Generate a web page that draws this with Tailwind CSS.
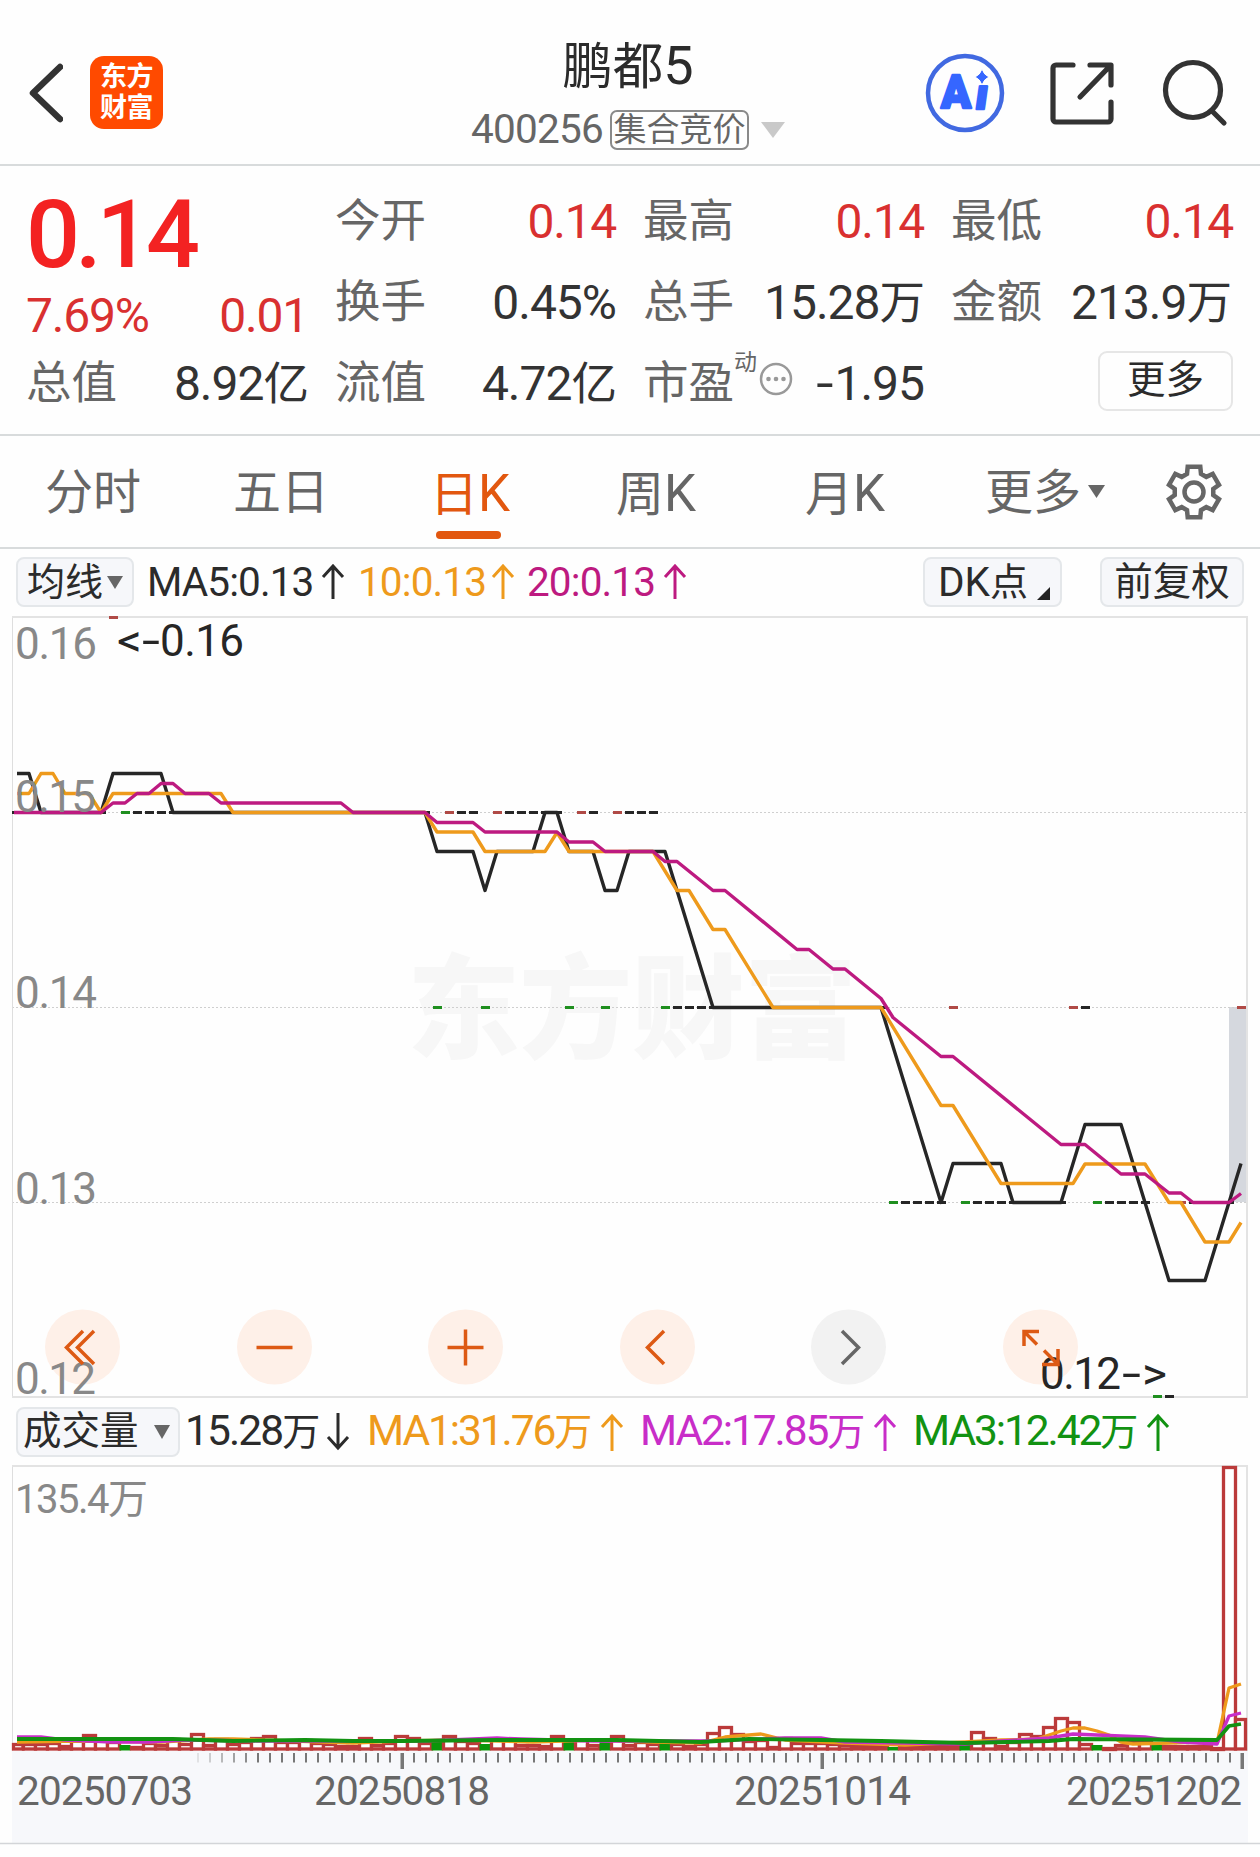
<!DOCTYPE html>
<html lang="zh-CN">
<head>
<meta charset="utf-8">
<title>鹏都5 400256</title>
<script src="https://cdn.jsdelivr.net/npm/@tailwindcss/browser@4"></script>
</head>
<body class="w-[1260px] h-[1857px] overflow-hidden bg-[#fefefe] font-['Roboto','Noto_Sans_CJK_SC',sans-serif] text-[#2b2b2b] leading-none">

<header class="h-[166px] border-b-2 border-[#d8dbdc] flex items-start whitespace-nowrap">
  <div class="w-[440px] pt-[56px] pl-[26px] flex items-center gap-[27px]">
    <svg class="w-[37px] h-[73px]" viewBox="0 0 37 73" fill="none" stroke="#333" stroke-width="6.500" stroke-linecap="round" stroke-linejoin="round"><path d="M34 11 7 37l27 26"/></svg>
    <div class="w-[73px] h-[73px] rounded-[14px] bg-[#ff4a00] text-white font-bold text-[27px] leading-[31px] pt-[6px] text-center tracking-[-0.5px]"><div>东方</div><div>财富</div></div>
  </div>
  <div class="w-[380px] pt-[39px] pr-[4px] flex flex-col items-center">
    <div class="text-[50.5px] leading-[54px]">鹏都<span class="text-[54px]">5</span></div>
    <div class="mt-[15px] h-[41px] flex items-center text-[#666]">
      <span class="text-[40.5px] tracking-[-0.8px]">400256</span>
      <span class="ml-[7px] w-[139px] h-[40px] rounded-[7px] border-2 border-[#8a8a8a] text-[33px] leading-[35px] text-center">集合竞价</span>
      <svg class="ml-[12px] w-[24px] h-[16px]" viewBox="0 0 24 16"><path d="M0 0h24L12 16z" fill="#c9c9c9"/></svg>
    </div>
  </div>
  <div class="flex-1 pt-[52px] pl-[104px] flex items-center">
    <svg class="w-[82px] h-[82px]" viewBox="0 0 82 82">
      <circle cx="41" cy="41" r="37" fill="none" stroke="#4169e1" stroke-width="4.500"/>
      <g fill="#3566ff" stroke="#3566ff" stroke-width="2.500" stroke-linejoin="round" font-family="Roboto" font-weight="900" font-size="47"><text x="17" y="56" textLength="30" lengthAdjust="spacingAndGlyphs">A</text><text font-size="43" x="50" y="57" transform="translate(8 0) skewX(-8)">ı</text></g>
      <path d="M58 17q2 6 7 8-5 2-7 8-2-6-7-8 5-2 7-8z" fill="#3566ff" stroke="#fefefe" stroke-width="1"/>
    </svg>
    <svg class="ml-[41px] w-[68px] h-[68px]" viewBox="0 0 68 68" fill="none" stroke="#333" stroke-width="5.200" stroke-linecap="round" stroke-linejoin="round"><path d="M26 6H9a3 3 0 0 0-3 3v51a3 3 0 0 0 3 3h52a3 3 0 0 0 3-3V43M43 6h21v20M63 7 33 38"/></svg>
    <svg class="ml-[43px] w-[70px] h-[70px]" viewBox="0 0 70 70" fill="none" stroke="#333" stroke-width="5.200" stroke-linecap="round"><circle cx="35" cy="32" r="27.500"/><path d="m54 53 12 12"/></svg>
  </div>
</header>

<section class="h-[270px] border-b-2 border-[#d8dbdc] pl-[26px] pr-[24px] grid grid-cols-[282px_281px_281px_282px] gap-x-[27px] whitespace-nowrap text-[45.5px] text-[#666]">
  <div class="pt-[20px]">
    <div class="h-[94px] pt-[3px] flex items-center text-[95px] font-medium tracking-[-4.8px] text-[#f32222]">0.14</div>
    <div class="h-[70px] pt-[2px] flex items-center justify-between text-[48px] tracking-[-1.2px] text-[#d93030]"><span>7.69%</span><span>0.01</span></div>
    <div class="h-[65px] pt-[3px] flex items-center justify-between"><span>总值</span><span class="text-[#333] tracking-[-1px]"><span class="text-[48px]">8.92</span>亿</span></div>
  </div>
  <div class="pt-[16px]">
    <div class="h-[80px] flex items-center justify-between"><span>今开</span><span class="text-[48px] tracking-[-1.3px] text-[#d93030]">0.14</span></div>
    <div class="h-[81px] flex items-center justify-between"><span>换手</span><span class="text-[48px] tracking-[-1px] text-[#333]">0.45%</span></div>
    <div class="h-[81px] flex items-center justify-between"><span>流值</span><span class="text-[#333] tracking-[-1px]"><span class="text-[48px]">4.72</span>亿</span></div>
  </div>
  <div class="pt-[16px]">
    <div class="h-[80px] flex items-center justify-between"><span>最高</span><span class="text-[48px] tracking-[-1.3px] text-[#d93030]">0.14</span></div>
    <div class="h-[81px] flex items-center justify-between"><span>总手</span><span class="text-[#333] tracking-[-1px]"><span class="text-[48px]">15.28</span>万</span></div>
    <div class="h-[81px] flex items-center"><span>市盈</span><span class="text-[23px] pb-[42px]">动</span>
      <svg class="ml-[1px] mb-[9px] w-[36px] h-[36px]" viewBox="0 0 36 36"><circle cx="18" cy="18" r="15" fill="none" stroke="#999" stroke-width="2.500"/><g fill="#999"><circle cx="10.500" cy="18" r="2.300"/><circle cx="18" cy="18" r="2.300"/><circle cx="25.500" cy="18" r="2.300"/></g></svg>
      <span class="ml-auto flex items-center text-[48px] tracking-[-1px] text-[#333]"><span class="inline-block scale-x-[1.3] mr-[4px]">-</span>1.95</span></div>
  </div>
  <div class="pt-[16px]">
    <div class="h-[80px] flex items-center justify-between"><span>最低</span><span class="text-[48px] tracking-[-1.3px] text-[#d93030]">0.14</span></div>
    <div class="h-[81px] flex items-center justify-between pr-[2px]"><span>金额</span><span class="text-[#333] tracking-[-1px]"><span class="text-[48px]">213.9</span>万</span></div>
    <div class="h-[81px] flex items-center justify-end"><div class="mb-[6px] w-[135px] h-[60px] rounded-[9px] border-2 border-[#e6e6e6] text-center text-[38.5px] leading-[54px] text-[#2b2b2b]">更多</div></div>
  </div>
</section>

<nav class="h-[113px] border-b-2 border-[#d8dbdc] pl-[45px] pt-[3px] flex items-center whitespace-nowrap text-[48px] text-[#666]">
  <div class="w-[188px]">分时</div>
  <div class="w-[197px]">五日</div>
  <div class="w-[186px] relative text-[#e2570f]">日<span class="text-[51px]">K</span><i class="absolute left-[6px] top-[63px] w-[65px] h-[8px] rounded-full bg-[#e2570f]"></i></div>
  <div class="w-[189px]">周<span class="text-[51px]">K</span></div>
  <div class="w-[180px]">月<span class="text-[51px]">K</span></div>
  <div class="w-[178px] flex items-center">更多<svg class="ml-[7px] mb-[3px] w-[17px] h-[13px]" viewBox="0 0 17 13"><path d="M0 0h17L8.500 13z" fill="#666"/></svg></div>
  <svg class="mb-[3px] w-[62px] h-[62px]" viewBox="-31 -31 62 62" fill="none" stroke="#666" stroke-width="4.500" stroke-linejoin="miter"><path id="gear"/><circle r="9.500"/></svg>
</nav>

<div class="h-[67px] pl-[16px] pr-[16px] pb-[1px] flex items-center whitespace-nowrap text-[40.5px] tracking-[-0.9px]">
  <div class="w-[118px] h-[50px] rounded-[8px] border-2 border-[#e4e7ea] bg-[#f6f7fa] pl-[9px] flex items-center text-[38px] tracking-normal">均线<svg class="ml-[4px] w-[16px] h-[13px]" viewBox="0 0 16 13"><path d="M0 0h16L8 13z" fill="#666"/></svg></div>
  <div class="ml-[13px] w-[211px] flex items-center justify-between pr-[13px]"><span>MA5:0.13</span><svg class="w-[24px] h-[36px]" viewBox="0 0 24 36" fill="none" stroke="currentColor" stroke-width="3"><path d="M12 35V2M2 13 12 2l10 11"/></svg></div>
  <div class="w-[169px] flex items-center justify-between pr-[12px] text-[#ee9a1c]"><span>10:0.13</span><svg class="w-[24px] h-[36px]" viewBox="0 0 24 36" fill="none" stroke="currentColor" stroke-width="3"><path d="M12 35V2M2 13 12 2l10 11"/></svg></div>
  <div class="w-[173px] flex items-center justify-between pr-[13px] text-[#bd1a80]"><span>20:0.13</span><svg class="w-[24px] h-[36px]" viewBox="0 0 24 36" fill="none" stroke="currentColor" stroke-width="3"><path d="M12 35V2M2 13 12 2l10 11"/></svg></div>
  <div class="ml-auto w-[139px] h-[50px] rounded-[8px] border-2 border-[#e4e7ea] bg-[#f6f7fa] pl-[13px] flex items-center text-[38px] tracking-[0px]"><span class="text-[40.5px]">DK</span>点<svg class="ml-[9px] mt-[22px] w-[13px] h-[13px]" viewBox="0 0 13 13"><path d="M13 0v13H0z" fill="#222"/></svg></div>
  <div class="ml-[38px] w-[144px] h-[50px] rounded-[8px] border-2 border-[#e4e7ea] bg-[#f6f7fa] text-center text-[38.5px] leading-[46px] tracking-normal">前复权</div>
</div>

<svg class="block w-[1260px] h-[782px] overflow-visible" viewBox="0 616 1260 782" id="price">
  <text x="407" y="1049" font-size="113" font-weight="900" fill="#f7f7f7" textLength="450" lengthAdjust="spacing">东方财富</text>
  <rect x="1229" y="1007" width="18" height="195" fill="#d5d8de"/>
  <g stroke="#cfcfcf" stroke-width="1" stroke-dasharray="2 2"><path d="M12 812.500H1246M12 1007.500H1246M12 1202.500H1246"/></g>
  <path d="M12.500 617V1397" stroke="#dedede" stroke-width="1"/><path d="M12 617H1247V1397H12" fill="none" stroke="#e3e3e3" stroke-width="2"/>
  <g id="dashes"></g>
  <g fill="none" stroke-width="3.400" stroke-linejoin="round" transform="translate(0 .5)">
    <path stroke="#262626" d="M17 773H29L41 812H101L113 773H161L173 812H425L437 851H473L485 890L497 851H533L545 812H557L569 851H593L605 890H617L629 851H665L713 1007H881L941 1202L953 1163H1001L1013 1202H1061L1085 1124H1121L1169 1280H1205L1241 1163"/>
    <path stroke="#ee9a1c" d="M17 793H29L41 773H53L65 793H89L101 812L113 793H221L233 812H425L437 831.500H473L485 851H545L557 832L569 851H653L677 890H689L713 929H725L773 1007H881L941 1105H953L1001 1183H1073L1085 1163.500H1145L1169 1202H1181L1205 1241.500H1229L1241 1222"/>
    <path stroke="#bd1a80" d="M14 812H101L113 802.500H125L137 793H149L161 783H173L185 793H209L221 802.500H341L353 812H425L437 822H473L485 831.500H557L569 841.500H593L605 851H653L665 861H677L713 890H725L797 949H809L833 968.500H845L881 998L893 1017L941 1056H953L1061 1144H1085L1121 1173.500H1145L1169 1192.500H1181L1193 1202H1229L1241 1193"/>
  </g>
  <g fill="#fef0e8"><circle cx="82.500" cy="1347" r="37.500"/><circle cx="274.500" cy="1347" r="37.500"/><circle cx="465.500" cy="1347" r="37.500"/><circle cx="657.500" cy="1347" r="37.500"/><circle cx="1040.500" cy="1347" r="37.500"/></g>
  <circle cx="848.500" cy="1347" r="37.500" fill="#f2f2f2"/>
  <g font-size="44" fill="#888">
    <text x="15" y="658.500" textLength="82">0.16</text><text x="15" y="812" textLength="81">0.15</text><text x="15" y="1008" textLength="82">0.14</text><text x="15" y="1203.500" textLength="82">0.13</text><text x="15" y="1394" textLength="81">0.12</text>
  </g>
  <g font-size="44" fill="#262626"><text x="160" y="656" textLength="84">0.16</text><text x="1040" y="1389" textLength="81">0.12</text>
    <text x="117" y="656" textLength="25" lengthAdjust="spacingAndGlyphs">&lt;</text><text x="142" y="656" textLength="18" lengthAdjust="spacingAndGlyphs">-</text>
    <text x="1122" y="1389" textLength="19" lengthAdjust="spacingAndGlyphs">-</text><text x="1142" y="1389" textLength="25" lengthAdjust="spacingAndGlyphs">&gt;</text></g>
  <g fill="none" stroke="#dd5a14" stroke-width="3.500">
    <path d="M83 1331 66.500 1347.500 83 1364M94 1331 77.500 1347.500 94 1364M256.500 1347.500h36M447.500 1347.500h36M465.500 1329.500v36M664 1331 647.500 1347.500 664 1364"/>
    <path d="M1024 1346V1331.500H1039M1024 1331.500 1037 1344.500M1058 1349V1364.500H1042M1058 1364.500 1044 1350.500"/>
    <path stroke="#666" d="m842 1331 16.500 16.500L842 1364"/>
  </g>
</svg>

<div class="h-[67px] pl-[16px] flex items-center whitespace-nowrap text-[42.5px]">
  <div class="w-[164px] h-[50px] rounded-[8px] border-2 border-[#e4e7ea] bg-[#f6f7fa] pl-[5px] flex items-center text-[38.5px]">成交量<svg class="ml-[15px] w-[16px] h-[14px]" viewBox="0 0 16 14"><path d="M0 0h16L8 14z" fill="#666"/></svg></div>
  <div class="ml-[5px] w-[182px] pr-[17px] flex items-center justify-between"><span class="tracking-[-1.9px]">15.28<span class="text-[38px]">万</span></span><svg class="w-[24px] h-[38px]" viewBox="0 0 24 38" fill="none" stroke="currentColor" stroke-width="3"><path d="M12 0v35M2 24l10 11 10-11"/></svg></div>
  <div class="w-[273px] pr-[16px] flex items-center justify-between text-[#ee9a1c]"><span class="tracking-[-2.1px]">MA1:31.76<span class="text-[38px]">万</span></span><svg class="w-[24px] h-[38px]" viewBox="0 0 24 38" fill="none" stroke="currentColor" stroke-width="3"><path d="M12 38V3M2 14 12 3l10 11"/></svg></div>
  <div class="w-[273px] pr-[16px] flex items-center justify-between text-[#c82dc8]"><span class="tracking-[-2.1px]">MA2:17.85<span class="text-[38px]">万</span></span><svg class="w-[24px] h-[38px]" viewBox="0 0 24 38" fill="none" stroke="currentColor" stroke-width="3"><path d="M12 38V3M2 14 12 3l10 11"/></svg></div>
  <div class="w-[273px] pr-[16px] flex items-center justify-between text-[#129212]"><span class="tracking-[-2.1px]">MA3:12.42<span class="text-[38px]">万</span></span><svg class="w-[24px] h-[38px]" viewBox="0 0 24 38" fill="none" stroke="currentColor" stroke-width="3"><path d="M12 38V3M2 14 12 3l10 11"/></svg></div>
</div>

<svg class="block w-[1260px] h-[392px]" viewBox="0 1465 1260 392">
  <rect x="12" y="1751" width="1236" height="92" fill="#f7f8fb"/>
  <path d="M0 1843.500H1260" stroke="#d3d5d8" stroke-width="1.500"/>
  <path d="M12.500 1466V1751" stroke="#dedede"/><path d="M12 1466H1247V1751" fill="none" stroke="#e3e3e3" stroke-width="2"/>
  <text x="15" y="1513" font-size="40" fill="#888" textLength="133">135.4万</text>
  <g id="bars"></g>
  <g fill="none" stroke-width="3.300" stroke-linejoin="round">
    <path stroke="#ee9a1c" d="M17 1742 77 1741 161 1742 209 1739 233 1739 293 1741 353 1743 401 1741 461 1740 533 1742 593 1740 653 1742 701 1743 725 1737 761 1734 785 1740 845 1743 905 1745 965 1742 1001 1740 1037 1739 1049 1735 1061 1731 1073 1728 1085 1728 1097 1731 1109 1735 1121 1742 1133 1744 1169 1743 1193 1742 1217 1743 1229 1688 1241 1684"/>
    <path stroke="#c82dc8" d="M17 1737 41 1737 65 1740 113 1742 149 1742 185 1740 257 1741 341 1741 425 1741 497 1738 521 1739 593 1741 665 1741 713 1741 785 1738 821 1738 845 1742 965 1744 1001 1741 1049 1738 1073 1734 1097 1735 1145 1737 1181 1742 1217 1744 1229 1716 1241 1713"/>
    <path stroke="#129212" stroke-width="3.800" d="M17 1739 65 1739 173 1739 233 1741 305 1740 353 1741 401 1741 497 1740 617 1740 701 1742 749 1739 821 1740 881 1741 965 1743 1049 1741 1073 1739 1217 1740 1229 1726 1241 1724"/>
  </g>
  <g id="ticks" fill="#777"></g>
  <g font-size="40.500" fill="#666"><text x="17" y="1805" textLength="176">20250703</text><text x="314" y="1805" textLength="176">20250818</text><text x="734" y="1805" textLength="177">20251014</text><text x="1066" y="1805" textLength="176">20251202</text></g>
</svg>

<script>
const center = i => 17 + 12 * i;

// Daily candles: opening equals closing, so each one is a short dash.
const K = '#262626', R = '#b04a46', G = '#1f8f1f';
const dash = (x, y, c) => `<rect x="${x - 4}" y="${y - 1}" width="9" height="3" fill="${c}"/>`;
const runs = [
  [617, R, 113, 113],
  [812, K, 17, 101], [812, G, 125, 125], [812, K, 137, 425], [812, R, 449, 449], [812, K, 461, 473], [812, R, 497, 497],
  [812, K, 509, 557], [812, R, 581, 581], [812, K, 593, 593], [812, R, 617, 617], [812, K, 629, 653],
  [1007, G, 437, 437], [1007, G, 485, 485], [1007, G, 569, 569], [1007, G, 605, 605], [1007, G, 665, 665], [1007, K, 677, 881],
  [1007, R, 953, 953], [1007, R, 1073, 1073], [1007, K, 1085, 1085], [1007, R, 1241, 1241],
  [1202, G, 893, 893], [1202, K, 905, 941], [1202, G, 965, 965], [1202, K, 977, 1061], [1202, G, 1097, 1097],
  [1202, K, 1109, 1145], [1202, R, 1181, 1181], [1202, K, 1193, 1229],
  [1396, G, 1157, 1157], [1396, K, 1169, 1169]
];
let out = '<rect x="12" y="811" width="6" height="3" fill="#262626"/>';
for (const [y, c, from, to] of runs) for (let x = from; x <= to; x += 12) out += dash(x, y, c);
document.getElementById('dashes').innerHTML = out;

// Volume bars, top edges; green bars are filled.
const tops = [1743,1743,1743,1742,1745,1738,1734,1738,1741,1745,1746,1742,1744,1738,1743,1733,1744,1738,1743,1741,1737,1735,1741,1741,1739,1742,1743,1745,1745,1737,1744,1742,1735,1737,
  1742,1742,1735,1740,1742,1744,1738,1738,1744,1744,1745,1735,1742,1739,1744,1738,1735,1744,1741,1743,1742,1743,1745,1743,1732,1726,1733,1740,1739,1746,1737,1742,1742,1742,1743,
  1744,1745,1745,1745,1747,1745,1745,1745,1745,1745,1745,1731,1737,1745,1741,1733,1735,1726,1717,1721,1743,1745,1747,1744,1741,1741,1745,1745,1745,1745,1745,1747,1466,1718];
const down = new Set([9, 35, 39, 46, 49, 54, 73, 79, 90, 95]);
document.getElementById('bars').innerHTML = tops.map((t, i) => down.has(i)
  ? `<rect x="${center(i) - 5.5}" y="${t}" width="11" height="${1750.5 - t}" fill="#0a960a"/>`
  : `<rect x="${i ? center(i) - 5.5 : 13.5}" y="${t + 1.5}" width="${i ? (i === 102 ? 10 : 12) : 9.5}" height="${Math.max(1, 1747.5 - t)}" fill="#fff" stroke="#bb3a3a" stroke-width="3.300"/>`).join('');

// Time axis ticks, fading in after the first label.
out = '';
for (let i = 15; i <= 102; i++) {
  const major = [32, 67, 102].includes(i);
  out += `<rect x="${17 + 12 * i - (major ? 0.5 : 0)}" y="1753" width="${major ? 3.5 : 2}" height="${major ? 16 : 9.5}" opacity="${Math.min(1, (i - 14) / 6)}"/>`;
}
document.getElementById('ticks').innerHTML = out;

// Six-toothed settings gear.
let d = '';
for (let k = 0; k < 6; k++) {
  for (const [r, a] of [[19.5, -21], [26, -14], [26, 14], [19.5, 21]]) {
    const t = (k * 60 - 90 + a) * Math.PI / 180;
    d += (d ? 'L' : 'M') + (r * Math.cos(t)).toFixed(2) + ' ' + (r * Math.sin(t)).toFixed(2);
  }
}
document.getElementById('gear').setAttribute('d', d + 'Z');
</script>
</body>
</html>
